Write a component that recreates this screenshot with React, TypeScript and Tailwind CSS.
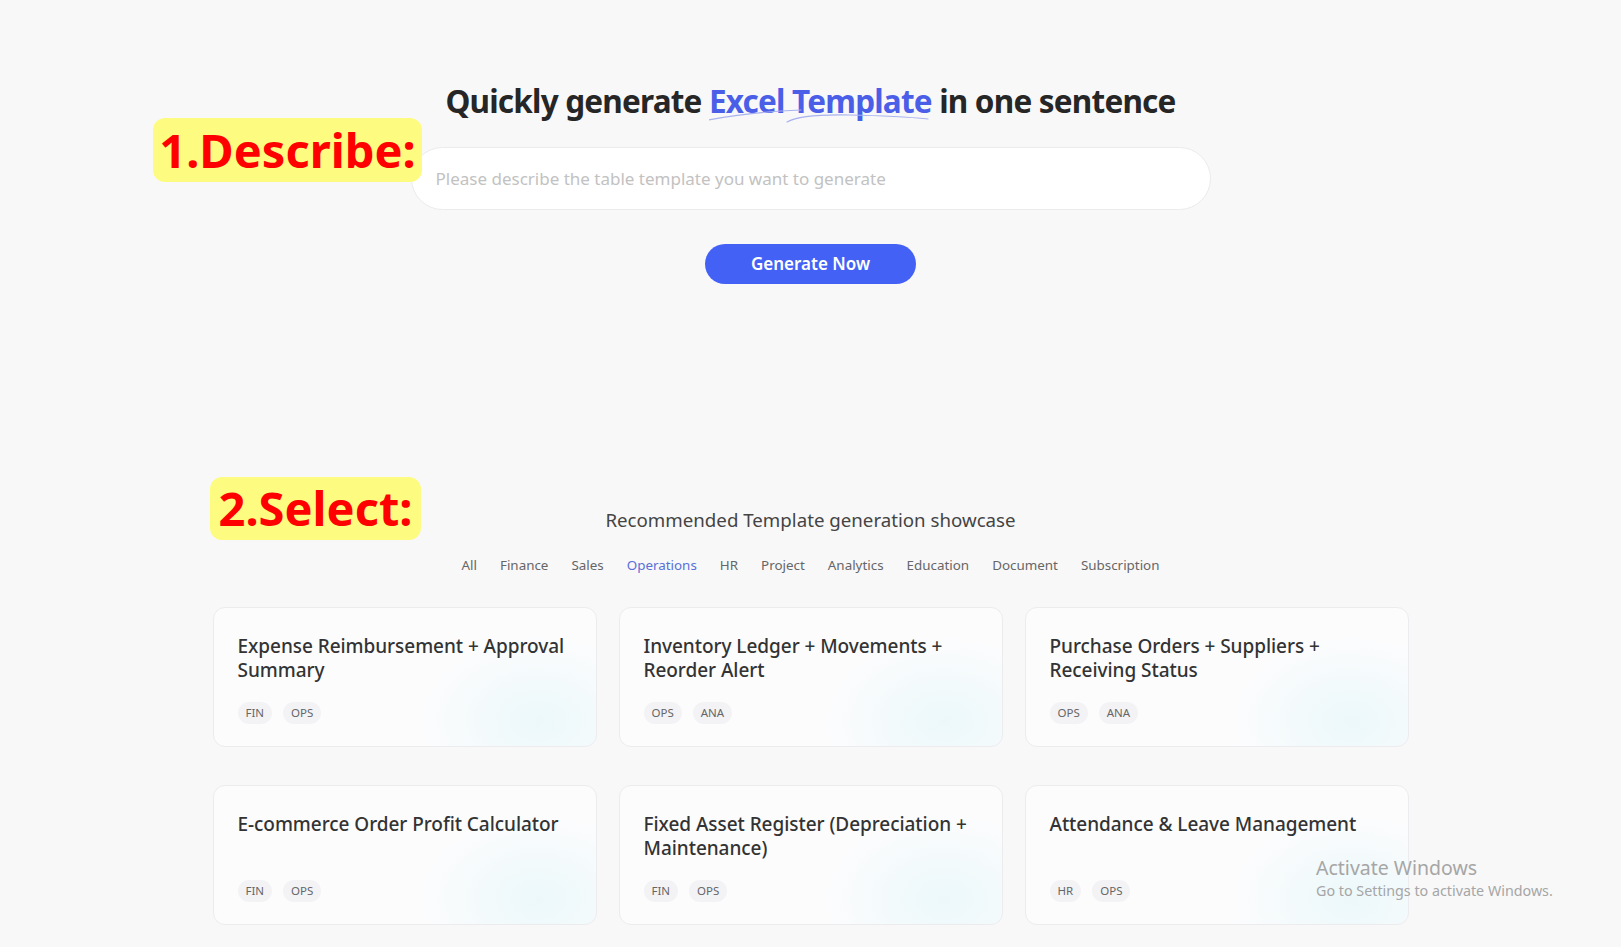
import React from "react";

const tabs = ["All", "Finance", "Sales", "Operations", "HR", "Project", "Analytics", "Education", "Document", "Subscription"];

const cards: { title: string; tags: string[] }[] = [
  { title: "Expense Reimbursement + Approval Summary", tags: ["FIN", "OPS"] },
  { title: "Inventory Ledger + Movements + Reorder Alert", tags: ["OPS", "ANA"] },
  { title: "Purchase Orders + Suppliers + Receiving Status", tags: ["OPS", "ANA"] },
  { title: "E-commerce Order Profit Calculator", tags: ["FIN", "OPS"] },
  { title: "Fixed Asset Register (Depreciation + Maintenance)", tags: ["FIN", "OPS"] },
  { title: "Attendance & Leave Management", tags: ["HR", "OPS"] },
];

export default function App() {
  return (
    <div
      className="relative min-h-screen w-full overflow-hidden bg-[#f8f8f9] text-[#262626]"
      style={{ fontFamily: '"Noto Sans", "Open Sans", sans-serif' }}
    >
      {/* Hero */}
      <section className="flex flex-col items-center pt-[81px]">
        <h1 className="text-[31.5px] font-bold leading-[40px] tracking-[-0.8px] text-[#262626]">
          Quickly generate{" "}
          <span className="relative inline-block text-[#4a5ee8]">
            Excel Template
            <svg
              className="pointer-events-none absolute left-0 top-[25px] h-[20px] w-[222px]"
              viewBox="0 0 222 20"
              fill="none"
            >
              <path d="M-1 14 Q 40 6 92 4" stroke="#a9b2ef" strokeWidth="1.2" strokeLinecap="round" />
              <path d="M78 16 Q 92 8 140 9 Q 190 10 219 13" stroke="#a9b2ef" strokeWidth="1.2" strokeLinecap="round" />
            </svg>
          </span>{" "}
          in one sentence
        </h1>

        <div className="mt-[26px] flex h-[63px] w-[800px] items-center rounded-full border border-[#ebebeb] bg-white px-6">
          <input
            className="w-full bg-transparent text-[17px] text-[#333] outline-none placeholder:text-[#c2c2c2]"
            placeholder="Please describe the table template you want to generate"
          />
        </div>

        <button className="mt-[34px] h-[40px] w-[211px] rounded-full bg-[#4461f6] text-[17px] font-semibold text-white">
          Generate Now
        </button>
      </section>

      {/* Showcase */}
      <section className="mt-[224px] flex flex-col items-center">
        <h2 className="text-[18.7px] leading-[24px] text-[#444]">Recommended Template generation showcase</h2>
        <div className="mt-[23px] flex items-center gap-[23px] text-[13.4px] leading-[20px] text-[#666]">
          {tabs.map((t) => (
            <span key={t} className={t === "Operations" ? "text-[#5a6fd8]" : ""}>
              {t}
            </span>
          ))}
        </div>

        <div className="mt-[32px] grid w-[1196px] grid-cols-3 gap-x-[22px] gap-y-[38px]">
          {cards.map((c) => (
            <div
              key={c.title}
              className="flex h-[140px] flex-col rounded-[12px] border border-[#ececef] bg-[#fcfcfd] bg-[radial-gradient(ellipse_120px_85px_at_85%_82%,rgba(222,245,248,0.55),rgba(252,252,253,0))] pb-[22px] pl-6 pr-5 pt-[26px]"
            >
              <div className="text-[19px] font-medium leading-[24px] tracking-[-0.05px] text-[#333]">{c.title}</div>
              <div className="mt-auto flex gap-[11px]">
                {c.tags.map((tag) => (
                  <span
                    key={tag}
                    className="flex h-[22px] items-center rounded-full bg-[#f3f3f6] px-2 text-[11.5px] text-[#666]"
                  >
                    {tag}
                  </span>
                ))}
              </div>
            </div>
          ))}
        </div>
      </section>

      {/* Annotation labels */}
      <div className="absolute left-[153px] top-[118px] flex h-[64px] w-[269px] items-center justify-center rounded-[12px] bg-[#fdfc80] text-[47px] font-bold leading-none text-[#ff0000]">
        1.Describe:
      </div>
      <div className="absolute left-[210px] top-[477px] flex h-[63px] w-[211px] items-center justify-center rounded-[12px] bg-[#fdfc80] text-[47px] font-bold leading-none text-[#ff0000]">
        2.Select:
      </div>

      {/* Windows watermark */}
      <div className="pointer-events-none absolute left-[1316px] top-[855px] text-[#a6a6a6]">
        <div className="text-[19.5px] leading-[26px]">Activate Windows</div>
        <div className="text-[14.3px] leading-[20px]">Go to Settings to activate Windows.</div>
      </div>
    </div>
  );
}
